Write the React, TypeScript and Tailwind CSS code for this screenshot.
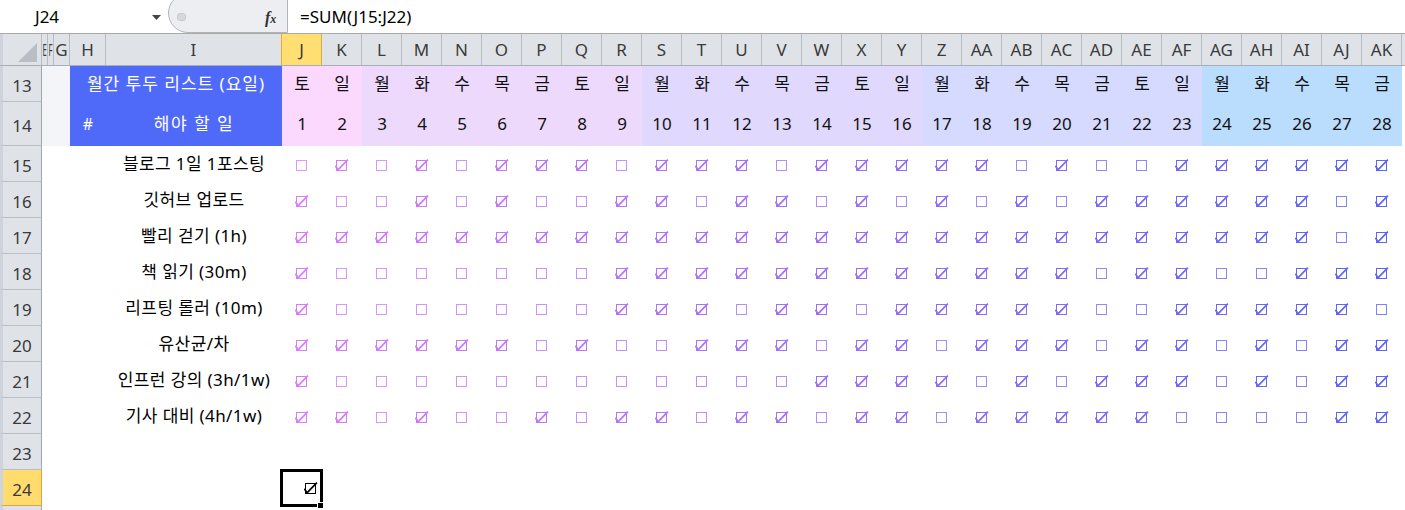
import React from 'react';

const FONT = "font-['Noto_Sans','Noto_Sans_CJK_KR',sans-serif]";
const GRID = 'grid grid-cols-[42px_6px_6px_16px_36px_176px_repeat(28,40px)_1fr]';

const COLS = ['J','K','L','M','N','O','P','Q','R','S','T','U','V','W','X','Y','Z','AA','AB','AC','AD','AE','AF','AG','AH','AI','AJ','AK'];
const WEEK = ['토','일','월','화','수','목','금'];

const TASKS: { name: string; v: number[] }[] = [
  { name: '블로그 1일 1포스팅', v: [0,1,0,1,0,1,1,1,0,1,1,1,0,1, 1,1,1,1,0,1,0,0,1,1,1,1,1,1] },
  { name: '깃허브 업로드', v: [1,0,0,1,0,1,0,0,1,1,0,1,1,0, 1,0,1,0,1,0,1,1,1,1,1,1,0,1] },
  { name: '빨리 걷기 (1h)', v: [1,1,1,1,1,1,1,1,1,1,1,1,1,1, 1,1,1,1,1,1,1,1,1,1,1,1,0,1] },
  { name: '책 읽기 (30m)', v: [1,0,0,0,0,0,0,0,1,1,1,1,1,1, 1,1,1,1,1,1,0,1,1,0,0,1,1,1] },
  { name: '리프팅 롤러 (10m)', v: [1,0,0,0,0,0,0,0,1,1,1,0,1,1, 0,1,1,1,1,1,0,0,1,1,1,1,1,0] },
  { name: '유산균/차', v: [1,1,1,1,1,1,0,1,0,0,1,1,1,0, 1,1,0,1,1,1,0,1,1,0,1,0,1,1] },
  { name: '인프런 강의 (3h/1w)', v: [1,0,0,0,0,0,0,0,0,0,0,0,0,1, 1,1,1,0,1,0,1,1,1,0,1,0,1,1] },
  { name: '기사 대비 (4h/1w)', v: [1,1,0,1,0,0,1,0,1,1,0,1,1,0, 1,1,0,1,1,1,1,1,0,0,0,0,1,1] },
];

function band(i: number) {
  if (i < 2) return 'bg-[#fbd8fd]';
  if (i < 9) return 'bg-[#ecd9fc]';
  if (i < 16) return 'bg-[#e0d9fd]';
  if (i < 23) return 'bg-[#d5dafe]';
  return 'bg-[#badcfd]';
}

function colColor(i: number) {
  const t = i / 27;
  const a = [218, 124, 246];
  const b = [92, 100, 240];
  const c = a.map((x, k) => Math.round(x + (b[k] - x) * t));
  return `rgb(${c[0]},${c[1]},${c[2]})`;
}

function Box({ checked, color }: { checked: boolean; color: string }) {
  return (
    <svg width="14" height="13" viewBox="0 0 14 13" style={{ color }}>
      <rect x="1.5" y="1.5" width="10" height="10" fill="none" stroke="currentColor" strokeWidth="1" opacity={checked ? 1 : 0.8} />
      {checked && (
        <>
          <path d="M0.4 6.8 L3 10.8 L12.9 0.7" fill="none" stroke="currentColor" strokeWidth="1.7" />
          <path d="M1.5 8.3 L3.6 11.6 L1.5 11.6 Z" fill="currentColor" />
        </>
      )}
    </svg>
  );
}

function RowHead({ n, active }: { n?: number; active?: boolean }) {
  return (
    <div
      className={
        active
          ? 'flex items-center justify-center pt-[4px] border-l-[3px] border-l-[#cfd3dc] border-r border-b border-r-[#e2a53c] border-b-[#e2a53c] bg-[#ffdc6d] text-[17px] text-[#3a3a3a]'
          : 'flex items-center justify-center pt-[4px] border-l-[3px] border-l-[#cfd3dc] border-r border-b border-r-[#9ea6b0] border-b-[#b9bfc7] bg-[#dfe3e8] text-[17px] text-[#3a3a3a]'
      }
    >
      {n}
    </div>
  );
}

export default function App() {
  const headers = ['E', 'F', 'G', 'H', 'I', ...COLS];
  return (
    <div className={`${FONT} w-[1405px] h-[510px] overflow-hidden bg-white text-black`}>
      {/* formula bar */}
      <div className="h-[34px] flex border-b border-[#a9a9a9] bg-white">
        <div className="relative w-[168px] flex items-center pl-[35px] text-[17px] text-black">
          J24
          <svg className="absolute left-[152px] top-[15px]" width="9" height="5" viewBox="0 0 9 5">
            <path d="M0 0 H9 L4.5 5 Z" fill="#444" />
          </svg>
        </div>
        <div className="relative w-[120px] h-[40px] -mt-[7px] rounded-l-[20px] border border-[#b4b4b4] bg-[#eceef1]">
          <div className="absolute left-[8px] top-[19px] w-[9px] h-[8px] rounded-[3px] bg-[#d6d8dc] border border-[#c8cacd]" />
          <span className="absolute left-[96px] top-[16px] font-['Liberation_Serif',serif] italic font-bold text-[16px] leading-none text-[#333]">
            f<span className="text-[12px]">x</span>
          </span>
        </div>
        <div className="flex-1 flex items-center pl-[12px] text-[17px] text-black">=SUM(J15:J22)</div>
      </div>

      {/* column headers */}
      <div className={`${GRID} h-[32px] bg-[#dfe3e8] border-b border-[#a7aeb8]`}>
        <div className="relative border-l-[3px] border-l-[#cfd3dc] border-r border-[#b7bdc5]">
          <svg className="absolute left-[15px] top-[9px]" width="20" height="20" viewBox="0 0 20 20">
            <path d="M19 0 V19 H0 Z" fill="#b9bec6" />
          </svg>
        </div>
        {headers.map((h) =>
          h === 'J' ? (
            <div key={h} className="flex items-center justify-center overflow-hidden bg-[#ffdf71] border-x border-[#e5a93f] -ml-px text-[17px] text-[#3a3a3a]">
              {h}
            </div>
          ) : h === 'E' || h === 'F' ? (
            <div key={h} className="flex items-center justify-center overflow-hidden border-r border-[#b7bdc5] text-[17px] text-[#3a3a3a]">
              <span className="inline-block scale-x-[0.45]">{h}</span>
            </div>
          ) : (
            <div key={h} className="flex items-center justify-center overflow-hidden border-r border-[#b7bdc5] text-[17px] text-[#3a3a3a]">
              {h}
            </div>
          )
        )}
        <div />
      </div>

      {/* row 13 */}
      <div className={`${GRID} h-[36px]`}>
        <RowHead n={13} />
        <div className="col-span-3 bg-[#f4f5f9]" />
        <div className="col-span-2 bg-[#4f6af8] flex items-center justify-center text-[17px] tracking-[1px] text-white">월간 투두 리스트 (요일)</div>
        {COLS.map((c, i) => (
          <div key={c} className={`${band(i)} flex items-center justify-center text-[17px] text-[#111]`}>{WEEK[i % 7]}</div>
        ))}
        <div />
      </div>

      {/* row 14 */}
      <div className={`${GRID} h-[44px]`}>
        <RowHead n={14} />
        <div className="col-span-3 bg-[#f4f5f9]" />
        <div className="bg-[#4f6af8] flex items-center justify-center text-[16px] text-white">#</div>
        <div className="bg-[#4f6af8] flex items-center justify-center text-[17px] tracking-[1.5px] text-white">해야 할 일</div>
        {COLS.map((c, i) => (
          <div key={c} className={`${band(i)} flex items-center justify-center text-[17px] text-[#111]`}>{i + 1}</div>
        ))}
        <div />
      </div>

      {/* task rows */}
      {TASKS.map((t, r) => (
        <div key={r} className={`${GRID} h-[36px]`}>
          <RowHead n={15 + r} />
          <div />
          <div />
          <div />
          <div />
          <div className="flex items-center justify-center text-[17px] tracking-[0.4px] text-black whitespace-nowrap">{t.name}</div>
          {t.v.map((v, i) => (
            <div key={i} className="flex items-center justify-center pt-[2px]">
              <Box checked={v === 1} color={colColor(i)} />
            </div>
          ))}
          <div />
        </div>
      ))}

      {/* row 23 */}
      <div className={`${GRID} h-[36px]`}>
        <RowHead n={23} />
      </div>

      {/* row 24 */}
      <div className={`${GRID} h-[36px] relative z-10`}>
        <RowHead n={24} active />
        <div />
        <div />
        <div />
        <div />
        <div />
        <div className="relative flex items-center justify-end pr-[4px] pt-[1px]">
          <Box checked color="#000" />
          <div className="absolute -left-[2px] -top-[1px] w-[43px] h-[38px] border-[3px] border-black" />
          <div className="absolute left-[35px] top-[32px] w-[7px] h-[7px] bg-black border border-white" />
        </div>
      </div>

      {/* row 25 partial */}
      <div className={`${GRID} h-[36px]`}>
        <RowHead />
      </div>
    </div>
  );
}
